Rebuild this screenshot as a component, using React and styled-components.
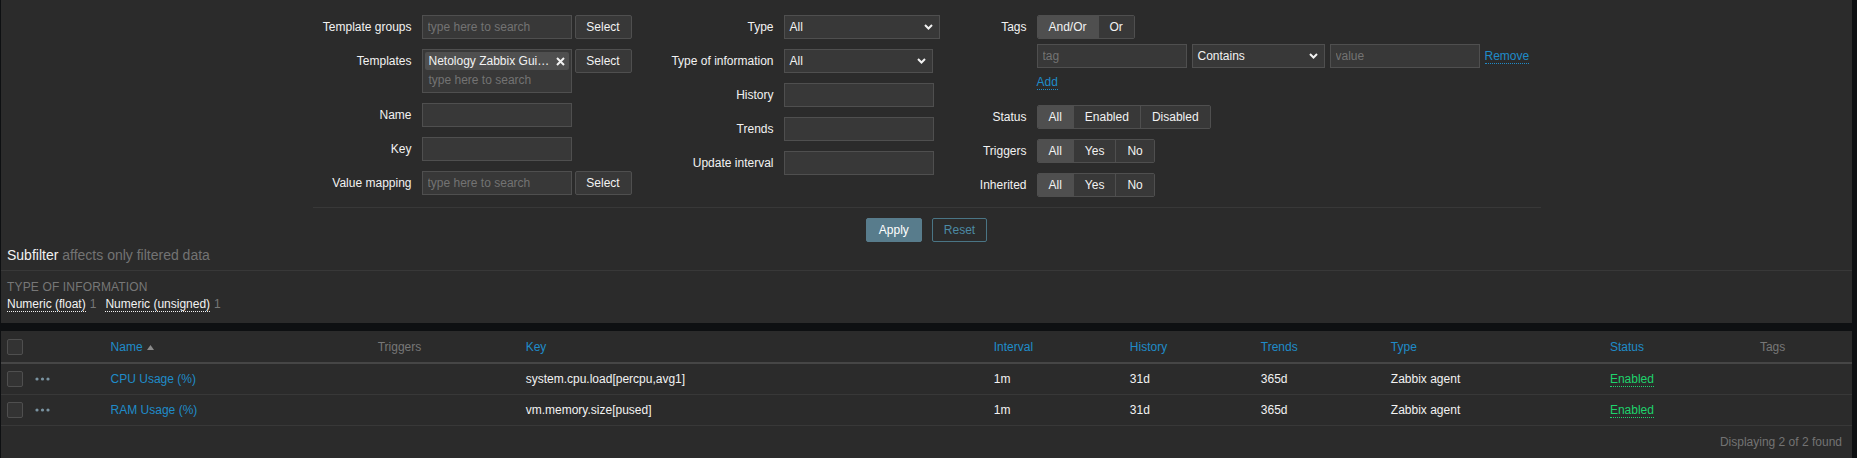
import styled, { createGlobalStyle } from 'styled-components'

const BLUE = '#1f8bc9'
const GREEN = '#1ed36c'
const MUTED = '#777777'

const GlobalStyle = createGlobalStyle`
  * { box-sizing: border-box; }
  html, body { margin: 0; padding: 0; background: #0e1012; }
  body {
    font-family: 'Liberation Sans', Arial, sans-serif;
    font-size: 12px;
    color: #f2f2f2;
  }
`

const Chevron = () => (
  <svg width="9" height="6" viewBox="0 0 9 6">
    <polyline points="1,1 4.5,4.5 8,1" fill="none" stroke="#f2f2f2" strokeWidth="2" />
  </svg>
)

const Cross = () => (
  <svg width="9" height="9" viewBox="0 0 9 9">
    <path d="M1 1L8 8M8 1L1 8" stroke="#f2f2f2" strokeWidth="2" />
  </svg>
)

const Dots = () => (
  <svg width="15" height="4" viewBox="0 0 15 4">
    <circle cx="2" cy="2" r="1.6" fill="#7a93a1" />
    <circle cx="7.5" cy="2" r="1.6" fill="#7a93a1" />
    <circle cx="13" cy="2" r="1.6" fill="#7a93a1" />
  </svg>
)

const SortArrow = () => (
  <svg width="7" height="5" viewBox="0 0 7 5">
    <polygon points="3.5,0 7,5 0,5" fill="#8a8a8a" />
  </svg>
)

const App = () => {
  return (
    <>
      <GlobalStyle />
      <Page>
        <FilterPanel>
          <FilterBody>
            <Columns>
              <FormColumn $width={347} $label={99}>
                <Label>Template groups</Label>
                <Field>
                  <Input $w={150} placeholder="type here to search" />
                  <Button>Select</Button>
                </Field>
                <Label>Templates</Label>
                <Field>
                  <MultiSelect>
                    <Chip>
                      <ChipText>Netology Zabbix Gui…</ChipText>
                      <Cross />
                    </Chip>
                    <MultiSearch>type here to search</MultiSearch>
                  </MultiSelect>
                  <Button>Select</Button>
                </Field>
                <Label>Name</Label>
                <Input $w={150} />
                <Label>Key</Label>
                <Input $w={150} />
                <Label>Value mapping</Label>
                <Field>
                  <Input $w={150} placeholder="type here to search" />
                  <Button>Select</Button>
                </Field>
              </FormColumn>

              <FormColumn $width={300} $label={114}>
                <Label>Type</Label>
                <Select $w={156}>
                  All
                  <Chevron />
                </Select>
                <Label>Type of information</Label>
                <Select $w={149}>
                  All
                  <Chevron />
                </Select>
                <Label>History</Label>
                <Input $w={150} />
                <Label>Trends</Label>
                <Input $w={150} />
                <Label>Update interval</Label>
                <Input $w={150} />
              </FormColumn>

              <FormColumn $label={67}>
                <Label>Tags</Label>
                <div>
                  <Radio>
                    <RadioItem $on>And/Or</RadioItem>
                    <RadioItem>Or</RadioItem>
                  </Radio>
                  <TagRow>
                    <Input $w={150} placeholder="tag" />
                    <Select $w={133}>
                      Contains
                      <Chevron />
                    </Select>
                    <Input $w={150} placeholder="value" />
                    <Link>Remove</Link>
                  </TagRow>
                  <AddRow>
                    <Link>Add</Link>
                  </AddRow>
                </div>
                <Label>Status</Label>
                <Radio>
                  <RadioItem $on>All</RadioItem>
                  <RadioItem>Enabled</RadioItem>
                  <RadioItem>Disabled</RadioItem>
                </Radio>
                <Label>Triggers</Label>
                <Radio>
                  <RadioItem $on>All</RadioItem>
                  <RadioItem>Yes</RadioItem>
                  <RadioItem>No</RadioItem>
                </Radio>
                <Label>Inherited</Label>
                <Radio>
                  <RadioItem $on>All</RadioItem>
                  <RadioItem>Yes</RadioItem>
                  <RadioItem>No</RadioItem>
                </Radio>
              </FormColumn>
            </Columns>
            <Actions>
              <ApplyButton>Apply</ApplyButton>
              <ResetButton>Reset</ResetButton>
            </Actions>
          </FilterBody>

          <SubfilterHeader>
            Subfilter <span>affects only filtered data</span>
          </SubfilterHeader>
          <SubfilterBody>
            <SubfilterName>Type of information</SubfilterName>
            <SubfilterValues>
              <span>
                <SubfilterLink>Numeric (float)</SubfilterLink>
                <Count>1</Count>
              </span>
              <span>
                <SubfilterLink>Numeric (unsigned)</SubfilterLink>
                <Count>1</Count>
              </span>
            </SubfilterValues>
          </SubfilterBody>
        </FilterPanel>

        <ListPanel>
          <Table>
            <colgroup>
              {[28.6, 76, 267, 148, 468, 136, 131, 130, 219, 150, 97].map((w, i) => (
                <col key={i} style={{ width: w }} />
              ))}
            </colgroup>
            <thead>
              <tr>
                <Th><Checkbox /></Th>
                <Th />
                <Th $link>
                  Name <SortArrow />
                </Th>
                <Th>Triggers</Th>
                <Th $link>Key</Th>
                <Th $link>Interval</Th>
                <Th $link>History</Th>
                <Th $link>Trends</Th>
                <Th $link>Type</Th>
                <Th $link>Status</Th>
                <Th>Tags</Th>
              </tr>
            </thead>
            <tbody>
              {items.map((item) => (
                <tr key={item.key}>
                  <Td><Checkbox /></Td>
                  <Td><Dots /></Td>
                  <Td><ItemLink>{item.name}</ItemLink></Td>
                  <Td />
                  <Td>{item.key}</Td>
                  <Td>1m</Td>
                  <Td>31d</Td>
                  <Td>365d</Td>
                  <Td>Zabbix agent</Td>
                  <Td><StatusLink>Enabled</StatusLink></Td>
                  <Td />
                </tr>
              ))}
            </tbody>
          </Table>
          <Footer>Displaying 2 of 2 found</Footer>
        </ListPanel>
      </Page>
    </>
  )
}

const items = [
  { name: 'CPU Usage (%)', key: 'system.cpu.load[percpu,avg1]' },
  { name: 'RAM Usage (%)', key: 'vm.memory.size[pused]' },
]

const Page = styled.div`
  min-height: 100vh;
  padding: 0 5px 0 1px;
  display: flex;
  flex-direction: column;
  gap: 8px;
`

const FilterPanel = styled.section`
  background: #2b2b2b;
`

const FilterBody = styled.div`
  width: 1228px;
  margin: 0 auto;
  padding-top: 15px;
`

const Columns = styled.div`
  display: flex;
  padding-bottom: 10px;
  border-bottom: 1px solid #383838;
`

const FormColumn = styled.div`
  width: ${(p) => (p.$width ? `${p.$width}px` : 'auto')};
  flex: ${(p) => (p.$width ? 'none' : '1')};
  display: grid;
  grid-template-columns: ${(p) => p.$label}px auto;
  column-gap: 10px;
  row-gap: 10px;
  align-content: start;
  align-items: start;
  justify-items: start;
`

const Label = styled.div`
  justify-self: stretch;
  text-align: right;
  line-height: 24px;
  white-space: nowrap;
`

const Field = styled.div`
  display: flex;
  align-items: flex-start;
  gap: 3px;
`

const Input = styled.input`
  width: ${(p) => p.$w}px;
  height: 24px;
  padding: 0 5px;
  background: #383838;
  border: 1px solid #4f4f4f;
  color: #f2f2f2;
  font: inherit;
  outline: none;

  &::placeholder {
    color: #737373;
  }
`

const Button = styled.button`
  height: 24px;
  width: 57px;
  padding: 0;
  background: #383838;
  border: 1px solid #4f4f4f;
  border-radius: 2px;
  color: #f2f2f2;
  font: inherit;
`

const Select = styled.div`
  width: ${(p) => p.$w}px;
  height: 24px;
  padding: 0 6px 0 5px;
  display: flex;
  align-items: center;
  justify-content: space-between;
  background: #383838;
  border: 1px solid #4f4f4f;
`

const MultiSelect = styled.div`
  width: 150px;
  height: 44px;
  padding: 2px;
  background: #383838;
  border: 1px solid #4f4f4f;
`

const Chip = styled.div`
  height: 18px;
  padding: 0 4px 0 4px;
  display: flex;
  align-items: center;
  justify-content: space-between;
  background: #4f4f4f;
  border-radius: 2px;
`

const ChipText = styled.span`
  white-space: nowrap;
  line-height: 18px;
`

const MultiSearch = styled.div`
  padding: 0 4px;
  line-height: 20px;
  color: #737373;
`

const Radio = styled.div`
  display: inline-flex;
  height: 24px;
  border: 1px solid #4f4f4f;
  border-radius: 2px;
  overflow: hidden;
`

const RadioItem = styled.div`
  padding: 0 11px;
  line-height: 22px;
  background: ${(p) => (p.$on ? '#4f4f4f' : '#383838')};

  & + & {
    border-left: 1px solid #4f4f4f;
  }
`

const TagRow = styled.div`
  display: flex;
  align-items: center;
  gap: 5px;
  margin-top: 5px;
`

const AddRow = styled.div`
  padding: 5px 0 4px;
  line-height: 18px;
`

const Link = styled.span`
  color: ${BLUE};
  border-bottom: 1px dotted ${BLUE};
  line-height: 14px;
`

const Actions = styled.div`
  display: flex;
  justify-content: center;
  gap: 10px;
  padding-top: 10px;
`

const ApplyButton = styled.button`
  height: 24px;
  padding: 0 12px;
  background: #587c8c;
  border: 1px solid #587c8c;
  border-radius: 2px;
  color: #ffffff;
  font: inherit;
`

const ResetButton = styled.button`
  height: 24px;
  padding: 0 11px;
  background: transparent;
  border: 1px solid #4a7585;
  border-radius: 2px;
  color: #4c8aa4;
  font: inherit;
`

const SubfilterHeader = styled.div`
  padding: 5px 6px 7px;
  font-size: 14px;
  line-height: 16px;
  border-bottom: 1px solid #383838;

  span {
    color: #737373;
  }
`

const SubfilterBody = styled.div`
  padding: 9px 6px 12px;
`

const SubfilterName = styled.div`
  color: ${MUTED};
  text-transform: uppercase;
  letter-spacing: 0.15px;
  line-height: 14px;
`

const SubfilterValues = styled.div`
  display: flex;
  gap: 9px;
  margin-top: 3px;
  line-height: 14px;
`

const SubfilterLink = styled.span`
  border-bottom: 1px dotted #f2f2f2;
`

const Count = styled.span`
  color: ${MUTED};
  margin-left: 4px;
`

const ListPanel = styled.section`
  flex: 1;
  background: #2b2b2b;
`

const Table = styled.table`
  width: 100%;
  table-layout: fixed;
  border-collapse: separate;
  border-spacing: 0;
`

const Th = styled.th`
  height: 33px;
  padding: 0 5px;
  text-align: left;
  font-weight: normal;
  white-space: nowrap;
  color: ${(p) => (p.$link ? BLUE : MUTED)};
  border-bottom: 2px solid #464646;
  vertical-align: middle;

  svg {
    margin-left: 1px;
    vertical-align: 1px;
  }
`

const Td = styled.td`
  height: 31px;
  padding: 0 5px;
  white-space: nowrap;
  border-bottom: 1px solid #383838;
  vertical-align: middle;

  svg {
    display: block;
  }
`

const Checkbox = styled.span`
  display: block;
  width: 16px;
  height: 16px;
  margin-left: 1px;
  background: #333333;
  border: 1px solid #4f4f4f;
  border-radius: 2px;
`

const ItemLink = styled.span`
  color: ${BLUE};
`

const StatusLink = styled.span`
  color: ${GREEN};
  border-bottom: 1px dotted ${GREEN};
`

const Footer = styled.div`
  padding: 9px 10px;
  text-align: right;
  line-height: 14px;
  color: #737373;
`

export default App
